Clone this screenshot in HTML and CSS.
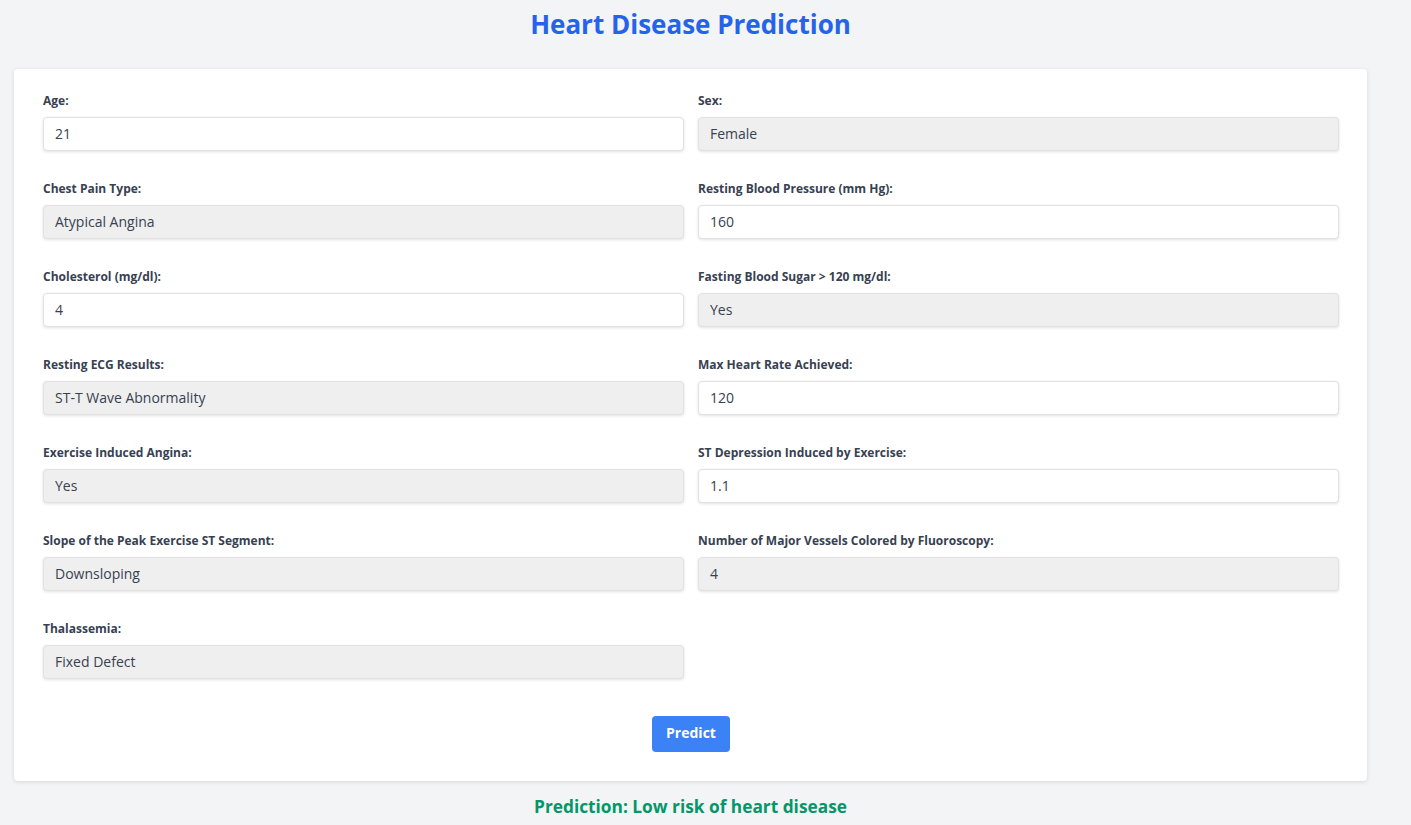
FILE: index.html
```html
<!DOCTYPE html>
<html lang="en">
<head>
<meta charset="utf-8">
<title>Heart Disease Prediction</title>
<link rel="stylesheet" href="styles.css">
</head>
<body>
<div class="page">
  <h1 class="title">Heart Disease Prediction</h1>
  <form class="card">
    <div class="grid">
      <div class="field">
        <label class="label">Age:</label>
        <input class="control" type="text" value="21">
      </div>
      <div class="field">
        <label class="label">Sex:</label>
        <select class="control select" disabled><option>Female</option></select>
      </div>
      <div class="field">
        <label class="label">Chest Pain Type:</label>
        <select class="control select" disabled><option>Atypical Angina</option></select>
      </div>
      <div class="field">
        <label class="label">Resting Blood Pressure (mm Hg):</label>
        <input class="control" type="text" value="160">
      </div>
      <div class="field">
        <label class="label">Cholesterol (mg/dl):</label>
        <input class="control" type="text" value="4">
      </div>
      <div class="field">
        <label class="label">Fasting Blood Sugar &gt; 120 mg/dl:</label>
        <select class="control select" disabled><option>Yes</option></select>
      </div>
      <div class="field">
        <label class="label">Resting ECG Results:</label>
        <select class="control select" disabled><option>ST-T Wave Abnormality</option></select>
      </div>
      <div class="field">
        <label class="label">Max Heart Rate Achieved:</label>
        <input class="control" type="text" value="120">
      </div>
      <div class="field">
        <label class="label">Exercise Induced Angina:</label>
        <select class="control select" disabled><option>Yes</option></select>
      </div>
      <div class="field">
        <label class="label">ST Depression Induced by Exercise:</label>
        <input class="control" type="text" value="1.1">
      </div>
      <div class="field">
        <label class="label">Slope of the Peak Exercise ST Segment:</label>
        <select class="control select" disabled><option>Downsloping</option></select>
      </div>
      <div class="field">
        <label class="label">Number of Major Vessels Colored by Fluoroscopy:</label>
        <select class="control select" disabled><option>4</option></select>
      </div>
      <div class="field">
        <label class="label">Thalassemia:</label>
        <select class="control select" disabled><option>Fixed Defect</option></select>
      </div>
    </div>
    <div class="actions">
      <button class="btn" type="button">Predict</button>
    </div>
  </form>
  <p class="result">Prediction: Low risk of heart disease</p>
</div>
</body>
</html>
```
FILE: styles.css
```css
html, body {
  margin: 0;
  padding: 0;
  background: #f3f4f6;
  font-family: "Open Sans", "Noto Sans", sans-serif;
  color: #374151;
}
.page {
  width: 1353px;
  padding: 0 15px 0 14px;
}
.title {
  margin: 0;
  padding-top: 6px;
  height: 69px;
  box-sizing: border-box;
  text-align: center;
  font-size: 26px;
  line-height: 36px;
  font-weight: 700;
  color: #2563eb;
}
.card {
  background: #fff;
  border-radius: 4px;
  box-shadow: 0 1px 4px rgba(0,0,0,0.12);
  padding: 23px 28px 29px 29px;
}
.grid {
  display: grid;
  grid-template-columns: 1fr 1fr;
  column-gap: 14px;
  row-gap: 29px;
}
.field {
  display: flex;
  flex-direction: column;
}
.label {
  font-size: 12px;
  font-weight: 700;
  line-height: 18px;
  margin-bottom: 7px;
  color: #374151;
}
.control {
  box-sizing: border-box;
  height: 34px;
  width: 100%;
  border: 1px solid #e2e2e2;
  border-radius: 4px;
  box-shadow: 0 1px 3px rgba(0,0,0,0.12);
  background: #fff;
  padding: 0 11px 2px;
  font-family: inherit;
  font-size: 14px;
  color: #374151;
  outline: none;
  margin: 0;
}
.select {
  appearance: none;
  -webkit-appearance: none;
  background: #efefef;
  opacity: 1;
  color: #374151;
}
.actions {
  display: flex;
  justify-content: center;
  margin-top: 37px;
}
.btn {
  width: 78px;
  height: 36px;
  border: none;
  border-radius: 4px;
  background: #3b82f6;
  color: #fff;
  font-family: inherit;
  font-size: 14px;
  font-weight: 700;
  padding: 0 0 3px;
}
.result {
  margin: 14px 0 0;
  text-align: center;
  font-size: 17.3px;
  line-height: 24px;
  font-weight: 700;
  color: #059669;
}
```
